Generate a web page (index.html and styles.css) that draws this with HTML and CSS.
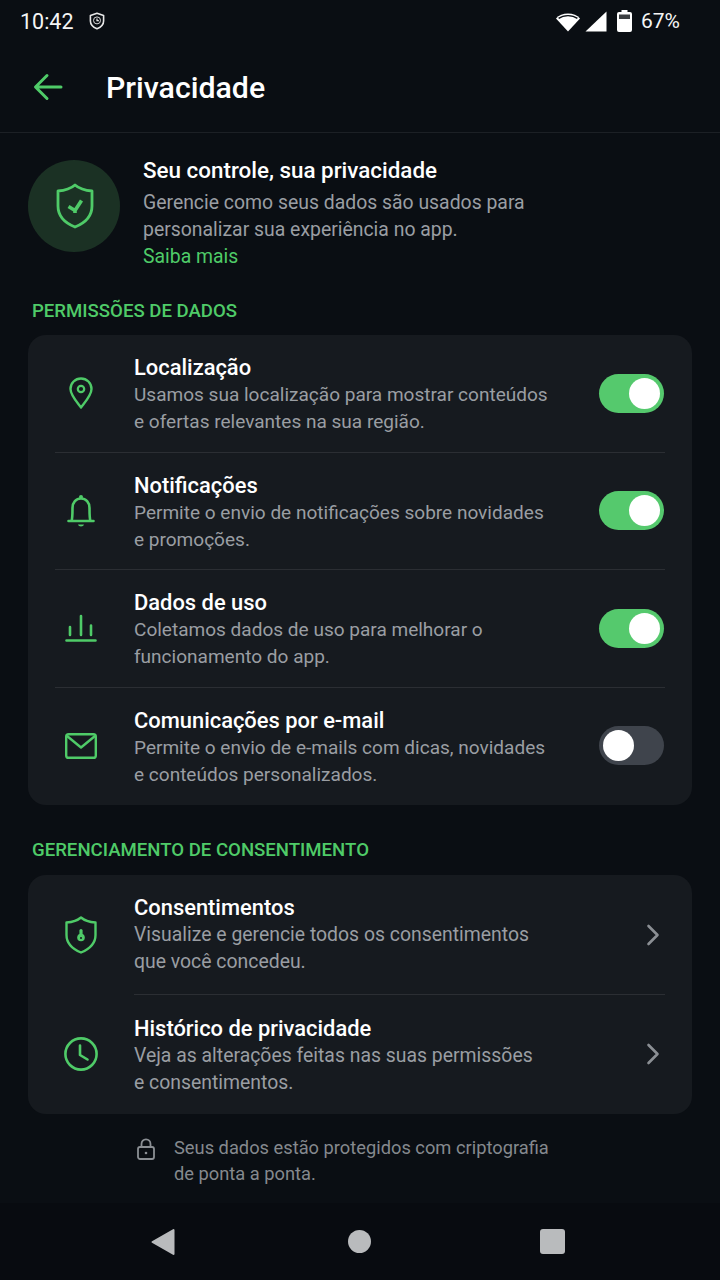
FILE: index.html
```html
<!DOCTYPE html>
<html>
<head>
    <title>Privacidade</title>
    <link rel="stylesheet" href="styles.css">
</head>
<body>
    <div class="phone">
        <div class="status-bar">
            <span class="clock">10:42</span>
            <svg class="status-shield" viewBox="0 0 16 18" width="16" height="18">
                <path d="M8 1.2 L14.6 3.4 V9 C14.6 12.6 11.8 15.2 8 16.8 C4.2 15.2 1.4 12.6 1.4 9 V3.4 Z" fill="none" stroke="#e8e8e8" stroke-width="1.6" stroke-linejoin="round"/>
                <circle cx="8" cy="8.4" r="3.5" fill="none" stroke="#d8d8d8" stroke-width="1"/>
                <path d="M8 6.4 V8.8 H10" fill="none" stroke="#fff" stroke-width="1.1"/>
            </svg>
            <span class="status-right">
                <svg viewBox="0 0 26 21" width="26" height="21">
                    <path d="M13 20.4 L1 7.6 C3.8 4.4 8 2.6 13 2.6 C18 2.6 22.2 4.4 25 7.6 Z" fill="#fff"/>
                    <path d="M3.6 7.4 C6 5.6 9.2 4.6 13 4.6 C16.8 4.6 20 5.6 22.4 7.4" fill="none" stroke="#0a0e13" stroke-width="1.4"/>
                </svg>
                <svg class="signal" viewBox="0 0 22 21" width="22" height="21"><path d="M21.5 .5 V20.5 H.5 Z" fill="#fff"/></svg>
                <svg class="battery" viewBox="0 0 15 22" width="15" height="22">
                    <path d="M4.5 0 H10.5 V2 H13 Q15 2 15 4 V20 Q15 22 13 22 H2 Q0 22 0 20 V4 Q0 2 2 2 H4.5 Z" fill="#fff"/>
                    <rect x="2" y="4.5" width="11" height="4.5" fill="#3c3f42"/>
                </svg>
                <span class="percent">67%</span>
            </span>
        </div>

        <header class="app-bar">
            <svg viewBox="0 0 30 28" width="30" height="28">
                <path d="M28 14 H3 M14 2.5 L2.5 14 L14 25.5" fill="none" stroke="#4fcb68" stroke-width="3" stroke-linecap="round" stroke-linejoin="round"/>
            </svg>
            <h1>Privacidade</h1>
        </header>

        <main class="content">
            <section class="intro">
                <div class="intro-badge">
                    <svg viewBox="0 0 38 46" width="38" height="46">
                        <path d="M19 2 C23 5.5 29 7.5 36 8 V23 C36 33 29 40 19 44 C9 40 2 33 2 23 V8 C9 7.5 15 5.5 19 2 Z" fill="none" stroke="#4fcb68" stroke-width="2.8" stroke-linejoin="round"/>
                        <path d="M12.5 23.5 L19 27.5 L25.5 17.5 M19 27 V30" fill="none" stroke="#4fcb68" stroke-width="3.6" stroke-linejoin="round"/>
                    </svg>
                </div>
                <div class="intro-text">
                    <h2>Seu controle, sua privacidade</h2>
                    <p>Gerencie como seus dados são usados para personalizar sua experiência no app.</p>
                    <a class="link">Saiba mais</a>
                </div>
            </section>

            <h3 class="section-label">Permissões de dados</h3>
            <section class="card">
                <div class="row">
                    <div class="row-icon">
                        <svg viewBox="0 0 24 32" width="24" height="32">
                            <path d="M12 30.5 C7 24 1.5 18 1.5 12 C1.5 6 6.2 1.5 12 1.5 C17.8 1.5 22.5 6 22.5 12 C22.5 18 17 24 12 30.5 Z" fill="none" stroke="#4fcb68" stroke-width="2.4" stroke-linejoin="round"/>
                            <circle cx="12" cy="12" r="3.2" fill="none" stroke="#4fcb68" stroke-width="2.2"/>
                        </svg>
                    </div>
                    <div class="row-text">
                        <h4>Localização</h4>
                        <p>Usamos sua localização para mostrar conteúdos<br>e ofertas relevantes na sua região.</p>
                    </div>
                    <span class="switch on"><span class="knob"></span></span>
                </div>
                <div class="row">
                    <div class="row-icon">
                        <svg viewBox="0 0 28 34" width="28" height="34">
                            <path d="M1.5 27 H26.5 M4.5 27 C5.5 25 5.5 22 5.5 14 C5.5 8.5 9 4.5 14 4.5 C19 4.5 22.5 8.5 22.5 14 C22.5 22 22.5 25 23.5 27" fill="none" stroke="#4fcb68" stroke-width="2.6" stroke-linecap="round"/>
                            <circle cx="14" cy="3" r="2" fill="#4fcb68"/>
                            <path d="M11 30.5 H17 C16.5 33 11.5 33 11 30.5 Z" fill="#4fcb68"/>
                        </svg>
                    </div>
                    <div class="row-text">
                        <h4>Notificações</h4>
                        <p>Permite o envio de notificações sobre novidades<br>e promoções.</p>
                    </div>
                    <span class="switch on"><span class="knob"></span></span>
                </div>
                <div class="row">
                    <div class="row-icon">
                        <svg viewBox="0 0 32 28" width="32" height="28">
                            <path d="M1.5 26.5 H30.5 M16 2 V21 M5 13 V21 M26 11.5 V21" fill="none" stroke="#4fcb68" stroke-width="2.6" stroke-linecap="round"/>
                        </svg>
                    </div>
                    <div class="row-text">
                        <h4>Dados de uso</h4>
                        <p>Coletamos dados de uso para melhorar o<br>funcionamento do app.</p>
                    </div>
                    <span class="switch on"><span class="knob"></span></span>
                </div>
                <div class="row">
                    <div class="row-icon">
                        <svg viewBox="0 0 32 26" width="32" height="26">
                            <rect x="1.2" y="1.2" width="29.6" height="23.6" rx="2.4" fill="none" stroke="#4fcb68" stroke-width="2.4"/>
                            <path d="M2 3 L16 14.5 L30 3" fill="none" stroke="#4fcb68" stroke-width="2.4" stroke-linejoin="round"/>
                        </svg>
                    </div>
                    <div class="row-text">
                        <h4>Comunicações por e-mail</h4>
                        <p>Permite o envio de e-mails com dicas, novidades<br>e conteúdos personalizados.</p>
                    </div>
                    <span class="switch"><span class="knob"></span></span>
                </div>
            </section>

            <h3 class="section-label second">Gerenciamento de consentimento</h3>
            <section class="card links">
                <div class="row">
                    <div class="row-icon">
                        <svg viewBox="0 0 32 38" width="32" height="38">
                            <path d="M16 1.5 C19.5 4.5 24.5 6 30.5 6.5 V19 C30.5 27 24.5 33 16 36.5 C7.5 33 1.5 27 1.5 19 V6.5 C7.5 6 12.5 4.5 16 1.5 Z" fill="none" stroke="#4fcb68" stroke-width="2.4" stroke-linejoin="round"/>
                            <circle cx="16" cy="21.5" r="3.8" fill="#4fcb68"/>
                            <circle cx="16" cy="22" r="1" fill="#161a1f"/>
                            <rect x="14.4" y="13" width="3.2" height="7" rx="1.6" fill="#4fcb68"/>
                        </svg>
                    </div>
                    <div class="row-text">
                        <h4>Consentimentos</h4>
                        <p>Visualize e gerencie todos os consentimentos<br>que você concedeu.</p>
                    </div>
                    <svg class="chevron" viewBox="0 0 14 22" width="14" height="22">
                        <path d="M2.5 2 L11.5 11 L2.5 20" fill="none" stroke="#8b8f94" stroke-width="2.6" stroke-linecap="round" stroke-linejoin="round"/>
                    </svg>
                </div>
                <div class="row">
                    <div class="row-icon">
                        <svg viewBox="0 0 34 34" width="34" height="34">
                            <circle cx="17" cy="17" r="15.6" fill="none" stroke="#4fcb68" stroke-width="2.6"/>
                            <path d="M16 8.5 V18 L23.5 22.5" fill="none" stroke="#4fcb68" stroke-width="2.6" stroke-linecap="round" stroke-linejoin="round"/>
                        </svg>
                    </div>
                    <div class="row-text">
                        <h4>Histórico de privacidade</h4>
                        <p>Veja as alterações feitas nas suas permissões<br>e consentimentos.</p>
                    </div>
                    <svg class="chevron" viewBox="0 0 14 22" width="14" height="22">
                        <path d="M2.5 2 L11.5 11 L2.5 20" fill="none" stroke="#8b8f94" stroke-width="2.6" stroke-linecap="round" stroke-linejoin="round"/>
                    </svg>
                </div>
            </section>

            <div class="note">
                <svg viewBox="0 0 18 22" width="18" height="22">
                    <path d="M4.5 9 V6 C4.5 3.4 6.4 1.4 9 1.4 C11.6 1.4 13.5 3.4 13.5 6 V9" fill="none" stroke="#8b8f94" stroke-width="1.8"/>
                    <rect x="1" y="9" width="16" height="12" rx="2" fill="none" stroke="#8b8f94" stroke-width="1.8"/>
                    <circle cx="9" cy="15" r="1.3" fill="#8b8f94"/>
                </svg>
                <p>Seus dados estão protegidos com criptografia<br>de ponta a ponta.</p>
            </div>
        </main>

        <nav class="nav-bar">
            <svg viewBox="0 0 24 28" width="24" height="28"><path d="M22.5 2 V26 L1.5 14 Z" fill="#b9bbbd" stroke="#b9bbbd" stroke-width="2" stroke-linejoin="round"/></svg>
            <span class="nav-home"></span>
            <span class="nav-square"></span>
        </nav>
    </div>
</body>
</html>
```

FILE: styles.css
```css
* {
    box-sizing: border-box;
}

body {
    margin: 0;
    background-color: #0a0e13;
    font-family: Roboto, "Noto Sans", sans-serif;
    color: #fff;
}

h1, h2, h3, h4, p {
    margin: 0;
}

.phone {
    width: 720px;
    height: 1280px;
    display: flex;
    flex-direction: column;
    overflow: hidden;
}

.status-bar {
    height: 44px;
    padding: 0 40px 2px 20px;
    display: flex;
    align-items: center;
}

.clock {
    font-size: 21.5px;
    color: #f5f5f5;
}

.status-shield {
    margin-left: 15px;
}

.status-right {
    margin-left: auto;
    display: flex;
    align-items: center;
}

.signal {
    margin-left: 4px;
}

.battery {
    margin-left: 10px;
}

.percent {
    margin-left: 9px;
    font-size: 21px;
    color: #f5f5f5;
}

.app-bar {
    height: 89px;
    padding: 0 0 2px 33px;
    display: flex;
    align-items: center;
    border-bottom: 1px solid #1c2025;
}

.app-bar h1 {
    margin-left: 43px;
    font-size: 30.3px;
    font-weight: 500;
}

.content {
    flex: 1;
    padding: 0 28px;
}

.intro {
    margin-top: 27px;
    display: flex;
}

.intro-badge {
    width: 92px;
    height: 92px;
    border-radius: 50%;
    background-color: #1b3124;
    display: flex;
    align-items: center;
    justify-content: center;
}

.intro-badge svg {
    margin-left: 2px;
}

.intro-text {
    margin-left: 23px;
    margin-top: -3px;
    width: 400px;
}

.intro-text h2 {
    font-size: 22.4px;
    font-weight: 500;
    line-height: 27px;
    margin-bottom: 5px;
}

.intro-text p {
    font-size: 19.4px;
    line-height: 27px;
    color: #9a9ea3;
}

.link {
    display: block;
    margin-top: 1px;
    font-size: 19.4px;
    line-height: 26px;
    color: #4fcb68;
}

.section-label {
    margin: 29px 0 0 4px;
    font-size: 18.6px;
    line-height: 24px;
    font-weight: 500;
    text-transform: uppercase;
    color: #4fcb68;
}

.section-label.second {
    margin-top: 33px;
}

.card {
    margin-top: 12px;
    padding: 0 27px;
    border-radius: 18px;
    background-color: #161a1f;
}

.section-label.second + .card {
    margin-top: 13px;
}

.row {
    height: 117.5px;
    display: flex;
    align-items: center;
    border-bottom: 1px solid #2b2e33;
}

.row:last-child {
    border-bottom: none;
}

.row:last-child .switch {
    margin-bottom: 2px;
}

.row-icon {
    width: 52px;
    margin-right: 27px;
    display: flex;
    justify-content: center;
}

.row-text {
    flex: 1;
    padding-top: 3px;
}

.row-text h4 {
    font-size: 21.9px;
    font-weight: 500;
    line-height: 27px;
}

.row-text p {
    font-size: 19.05px;
    line-height: 27px;
    color: #9a9ea3;
}

.links .row-text p {
    font-size: 19.4px;
}

.switch {
    width: 65px;
    height: 39px;
    margin-right: 1px;
    border-radius: 20px;
    background-color: #3f444c;
    padding: 4px;
    display: flex;
}

.switch.on {
    background-color: #55c96d;
    justify-content: flex-end;
}

.knob {
    width: 31px;
    height: 31px;
    border-radius: 50%;
    background-color: #fff;
}

.links .row {
    height: 119.5px;
}

.links .row:first-child {
    border-bottom: none;
    position: relative;
}

.links .row:first-child .row-text {
    padding-top: 0;
    padding-bottom: 1px;
}

.links .row:first-child::after {
    content: "";
    position: absolute;
    left: 79px;
    right: 0;
    bottom: 0;
    height: 1px;
    background-color: #2b2e33;
}

.chevron {
    margin-right: 5px;
}

.note {
    margin: 21px 0 0 109px;
    display: flex;
    align-items: flex-start;
}

.note svg {
    margin-top: 3px;
}

.note p {
    margin-left: 19px;
    font-size: 18.3px;
    line-height: 26px;
    color: #85898e;
}

.nav-bar {
    height: 77px;
    padding: 0 155px 0 151px;
    display: flex;
    align-items: center;
    justify-content: space-between;
    background-color: #080b10;
}

.nav-home {
    width: 23px;
    height: 23px;
    margin-left: 4px;
    border-radius: 50%;
    background-color: #b9bbbd;
}

.nav-square {
    width: 25px;
    height: 25px;
    border-radius: 3px;
    background-color: #b9bbbd;
}
```
